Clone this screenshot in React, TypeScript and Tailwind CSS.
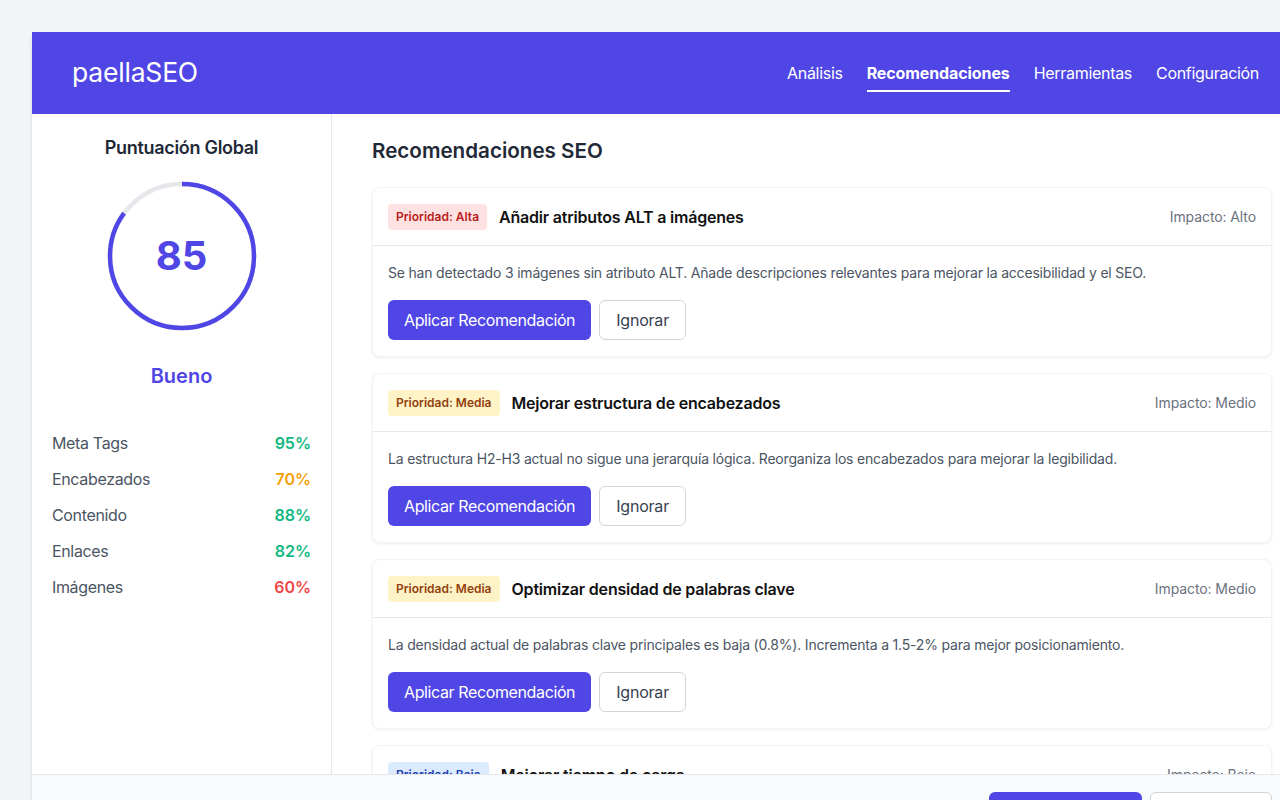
import React from "react";

type Rec = {
  priority: string;
  badge: string;
  title: string;
  impact: string;
  desc: string;
};

const recs: Rec[] = [
  {
    priority: "Prioridad: Alta",
    badge: "bg-[#fee2e2] text-[#b91c1c]",
    title: "Añadir atributos ALT a imágenes",
    impact: "Impacto: Alto",
    desc: "Se han detectado 3 imágenes sin atributo ALT. Añade descripciones relevantes para mejorar la accesibilidad y el SEO.",
  },
  {
    priority: "Prioridad: Media",
    badge: "bg-[#fef3c7] text-[#92400e]",
    title: "Mejorar estructura de encabezados",
    impact: "Impacto: Medio",
    desc: "La estructura H2-H3 actual no sigue una jerarquía lógica. Reorganiza los encabezados para mejorar la legibilidad.",
  },
  {
    priority: "Prioridad: Media",
    badge: "bg-[#fef3c7] text-[#92400e]",
    title: "Optimizar densidad de palabras clave",
    impact: "Impacto: Medio",
    desc: "La densidad actual de palabras clave principales es baja (0.8%). Incrementa a 1.5-2% para mejor posicionamiento.",
  },
  {
    priority: "Prioridad: Baja",
    badge: "bg-[#dbeafe] text-[#1e40af]",
    title: "Mejorar tiempo de carga",
    impact: "Impacto: Bajo",
    desc: "El tiempo de carga de la página es de 3.2s. Comprime las imágenes y minimiza los archivos CSS y JavaScript.",
  },
];

const stats = [
  { label: "Meta Tags", value: "95%", color: "text-[#10b981]" },
  { label: "Encabezados", value: "70%", color: "text-[#f59e0b]" },
  { label: "Contenido", value: "88%", color: "text-[#10b981]" },
  { label: "Enlaces", value: "82%", color: "text-[#10b981]" },
  { label: "Imágenes", value: "60%", color: "text-[#ef4444]" },
];

function ScoreRing() {
  const r = 72;
  const circ = 2 * Math.PI * r;
  const pct = 0.85;
  return (
    <div className="relative w-[150px] h-[150px]">
      <svg width="150" height="150" viewBox="0 0 150 150" className="-rotate-90">
        <circle cx="75" cy="75" r={r} fill="none" stroke="#e5e7eb" strokeWidth="4.5" />
        <circle
          cx="75"
          cy="75"
          r={r}
          fill="none"
          stroke="#4f46e5"
          strokeWidth="4.5"
          strokeDasharray={`${circ * pct} ${circ}`}
        />
      </svg>
      <div className="absolute inset-0 flex items-center justify-center text-[40px] font-bold text-[#4f46e5] leading-none">
        85
      </div>
    </div>
  );
}

export default function App() {
  return (
    <div
      className="h-screen w-screen overflow-hidden bg-[#f3f4f6] pt-8 pl-8"
      style={{ fontFamily: "Inter, 'Noto Sans', 'Liberation Sans', sans-serif" }}
    >
      <div className="w-[1280px] bg-white shadow-md flex flex-col">
        {/* Header */}
        <header className="h-[82px] bg-[#4f46e5] flex items-center justify-between pl-10 pr-[53px]">
          <div className="text-white text-[26.5px] font-normal tracking-[-0.2px]">paellaSEO</div>
          <nav className="flex items-center gap-6 text-white text-[16px] tracking-[-0.3px]">
            <span className="pt-[7px] pb-[5px] border-b-2 border-transparent">Análisis</span>
            <span className="pt-[7px] pb-[5px] font-bold border-b-2 border-white tracking-[-0.1px]">Recomendaciones</span>
            <span className="pt-[7px] pb-[5px] border-b-2 border-transparent">Herramientas</span>
            <span className="pt-[7px] pb-[5px] border-b-2 border-transparent">Configuración</span>
          </nav>
        </header>

        {/* Body */}
        <div className="flex h-[660px]">
          <aside className="w-[300px] shrink-0 border-r border-[#e5e7eb] px-5 pt-[20px]">
            <div className="flex flex-col items-center">
              <h2 className="text-[18px] leading-7 font-semibold text-[#1f2937] tracking-[-0.3px]">Puntuación Global</h2>
              <div className="mt-[19px]">
                <ScoreRing />
              </div>
              <div className="mt-[31px] text-[20px] leading-7 font-semibold text-[#4f46e5]">Bueno</div>
            </div>
            <div className="mt-[41px] flex flex-col gap-3">
              {stats.map((s) => (
                <div key={s.label} className="flex items-center justify-between text-[16px] leading-6">
                  <span className="text-[#4b5563] tracking-[-0.35px]">{s.label}</span>
                  <span className={`font-semibold ${s.color}`}>{s.value}</span>
                </div>
              ))}
            </div>
          </aside>

          <main className="flex-1 overflow-hidden px-10 pt-[23px]">
            <h1 className="text-[20.6px] leading-7 font-semibold text-[#1f2937]">Recomendaciones SEO</h1>
            <div className="mt-[22px] flex flex-col gap-4">
              {recs.map((r, i) => (
                <div
                  key={i}
                  className="bg-white rounded-lg border border-[#f3f4f6] shadow-[0_1px_3px_rgba(0,0,0,0.07)]"
                >
                  <div className="flex items-center justify-between px-[15px] h-[58px] border-b border-[#e5e7eb]">
                    <div className="flex items-center gap-3">
                      <span className={`h-[26px] px-2 rounded flex items-center text-[12px] font-semibold ${r.badge}`}>
                        {r.priority}
                      </span>
                      <span className="text-[16px] font-semibold text-[#111111] tracking-[-0.2px]">{r.title}</span>
                    </div>
                    <span className="text-[14px] text-[#6b7280] tracking-[-0.1px]">{r.impact}</span>
                  </div>
                  <div className="px-[15px] py-4">
                    <p className="text-[14px] leading-[21px] text-[#4b5563] tracking-[-0.19px]">{r.desc}</p>
                    <div className="mt-[17px] flex gap-2">
                      <button className="h-10 px-4 rounded-md bg-[#4f46e5] text-white text-[16px] tracking-[-0.38px]">
                        Aplicar Recomendación
                      </button>
                      <button className="h-10 px-4 rounded-md border border-[#d1d5db] bg-white text-[#374151] text-[16px] tracking-[-0.2px]">
                        Ignorar
                      </button>
                    </div>
                  </div>
                </div>
              ))}
            </div>
          </main>
        </div>

        {/* Footer */}
        <footer className="border-t border-[#e5e7eb] bg-[#f9fafb] flex justify-end gap-2 px-10 pt-[17px] pb-4">
          <button className="h-10 w-[153px] rounded-md bg-[#4f46e5] text-white text-[16px]">Aplicar</button>
          <button className="h-10 w-[122px] rounded-md border border-[#d1d5db] bg-white text-[#374151] text-[16px]">
            Exportar
          </button>
        </footer>
      </div>
    </div>
  );
}
